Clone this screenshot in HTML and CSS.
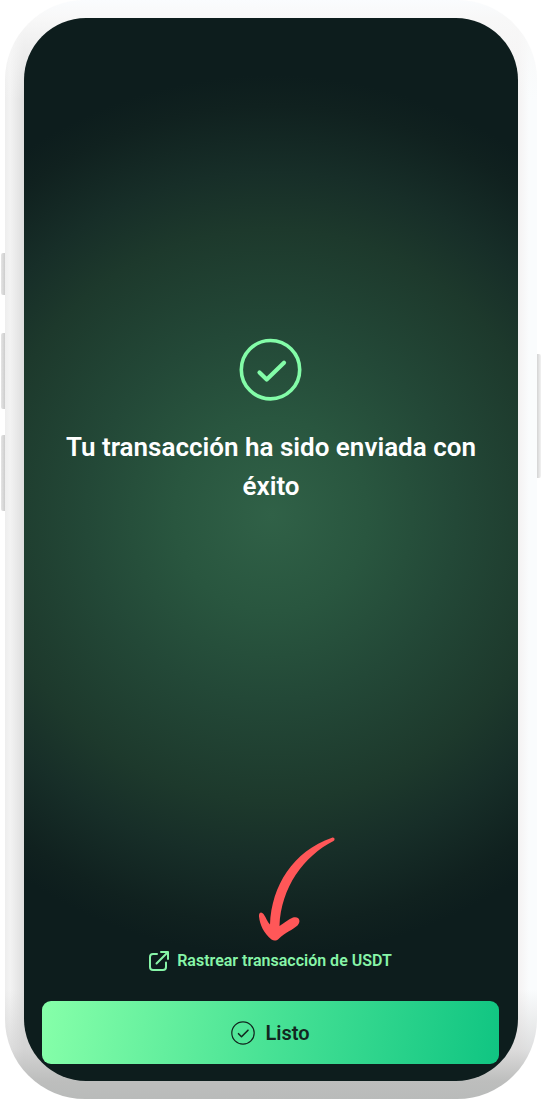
FILE: index.html
```html
<!DOCTYPE html>
<html lang="es">
<head>
<meta charset="utf-8">
<meta name="viewport" content="width=device-width, initial-scale=1">
<title>Transacción enviada</title>
<link rel="stylesheet" href="styles.css">
</head>
<body>
<div class="stage">
  <div class="phone">
    <span class="key key-mute"></span>
    <span class="key key-up"></span>
    <span class="key key-down"></span>
    <span class="key key-power"></span>
    <main class="screen">
      <section class="message">
        <svg class="message-icon" viewBox="0 0 62 62" fill="none" stroke="currentColor" stroke-linecap="round" stroke-linejoin="round" aria-hidden="true">
          <circle cx="30.500" cy="30.700" r="29.200" stroke-width="3.600"/>
          <path d="M19.500 33.500l7.200 7L44 23.700" stroke-width="4.200"/>
        </svg>
        <h1 class="message-title">Tu transacción ha sido enviada con éxito</h1>
      </section>
      <footer class="actions">
        <div class="track">
          <svg class="arrow" viewBox="0 0 76 104" fill="#ff5758" aria-hidden="true">
            <path d="M73 0.700C75.500 0 76.500 2.800 74.500 4C45 19 22 50 20.500 89C25 86 29 82.500 34 80.500C40 79 42.500 84 38.500 88.500C33.500 93 27 95 19.500 102C17.500 104 14.500 104 12.500 102.500C4.500 96 1 88 0 79.500C-0.300 75 2.500 74.500 4.500 77C7.500 81 8 85 11 87.500C12.500 49 34 14 73 0.700Z"/>
          </svg>
          <a class="track-link" href="#">
            <svg class="track-icon" viewBox="0 0 20 20" fill="none" stroke="currentColor" stroke-width="2" stroke-linecap="round" stroke-linejoin="round" aria-hidden="true">
              <path d="M8 3H4a3 3 0 0 0-3 3v10a3 3 0 0 0 3 3h10a3 3 0 0 0 3-3v-4.500"/>
              <path d="M7.500 12.500L18.500 1.500M12 1H19v7"/>
            </svg>
            Rastrear transacción de USDT
          </a>
        </div>
        <button class="done" type="button">
          <svg class="done-icon" viewBox="0 0 24 24" fill="none" stroke="currentColor" stroke-linecap="round" stroke-linejoin="round" aria-hidden="true">
            <circle cx="12" cy="12" r="11.200" stroke-width="1.200"/>
            <path d="M7.500 12.700l3 3 6.500-6.500" stroke-width="1.600"/>
          </svg>
          Listo
        </button>
      </footer>
    </main>
  </div>
</div>
</body>
</html>
```
FILE: styles.css
```css
* {
  box-sizing: border-box;
}

body {
  margin: 0;
  background: #fff;
  font-family: Roboto, "Liberation Sans", sans-serif;
}

.stage {
  display: flex;
  min-height: 100vh;
  padding: 0 6px 1px 5px;
}

.phone {
  position: relative;
  display: flex;
  flex: 1;
  padding: 18px 19px;
  border-radius: 80px;
  background:
    linear-gradient(to bottom, #fafcfe 0, #f8f8f8 18px, transparent 100px),
    linear-gradient(to top, #b9bbba 0, #bdbebd 18px, rgba(205, 205, 205, 0.6) 50px, transparent 110px),
    linear-gradient(to right, #eeeeee 0, #f3f3f3 5px, #dedede 19px, #f4f2f2 calc(100% - 19px), #fafcfd calc(100% - 8px), #fafcfd 100%);
}

.key {
  position: absolute;
  left: -4px;
  width: 4px;
  border-radius: 2px 0 0 2px;
  background: linear-gradient(to right, #e4e4e4, #cdcdcd);
}

.key-mute {
  top: 253px;
  height: 42px;
}

.key-up {
  top: 333px;
  height: 76px;
}

.key-down {
  top: 435px;
  height: 76px;
}

.key-power {
  top: 354px;
  right: -4px;
  left: auto;
  height: 124px;
  border-radius: 0 2px 2px 0;
  background: linear-gradient(to right, #d4d4d4, #f2f2f2);
}

.screen {
  display: flex;
  flex: 1;
  flex-direction: column;
  overflow: hidden;
  border-radius: 62px;
  background: radial-gradient(circle 440px at 50% 497px, #306147 0%, #29563f 22%, #234837 42%, #1d392c 65%, #172e28 78%, #10211f 93%, #0d1d1d 100%);
}

.message {
  display: flex;
  flex: 1;
  flex-direction: column;
  align-items: center;
  gap: 27px;
  padding: 321px 32px 0;
}

.message-icon {
  width: 62px;
  height: 62px;
  overflow: visible;
  color: #83fca8;
}

.message-title {
  margin: 0;
  color: #fff;
  font-size: 26px;
  font-weight: 600;
  line-height: 39px;
  text-align: center;
}

.actions {
  display: flex;
  flex-direction: column;
  gap: 28px;
  padding: 0 19px 17px 18px;
}

.track {
  position: relative;
  display: flex;
  justify-content: center;
}

.arrow {
  position: absolute;
  bottom: calc(100% + 8px);
  left: calc(50% - 12px);
  width: 76px;
  height: 104px;
}

.track-link {
  display: flex;
  align-items: center;
  gap: 8px;
  color: #87f5a8;
  font-size: 16px;
  font-weight: 600;
  line-height: 24px;
  text-decoration: none;
}

.track-icon {
  width: 20px;
  height: 20px;
}

.done {
  display: flex;
  align-items: center;
  justify-content: center;
  gap: 10px;
  height: 63px;
  padding: 0;
  border: 0;
  border-radius: 9px;
  background: linear-gradient(98deg, #86ffa9 0%, #48e295 50%, #10c582 100%);
  color: #12271f;
  font-family: inherit;
  font-size: 20px;
  font-weight: 600;
  line-height: 24px;
}

.done-icon {
  width: 24px;
  height: 24px;
}
```
